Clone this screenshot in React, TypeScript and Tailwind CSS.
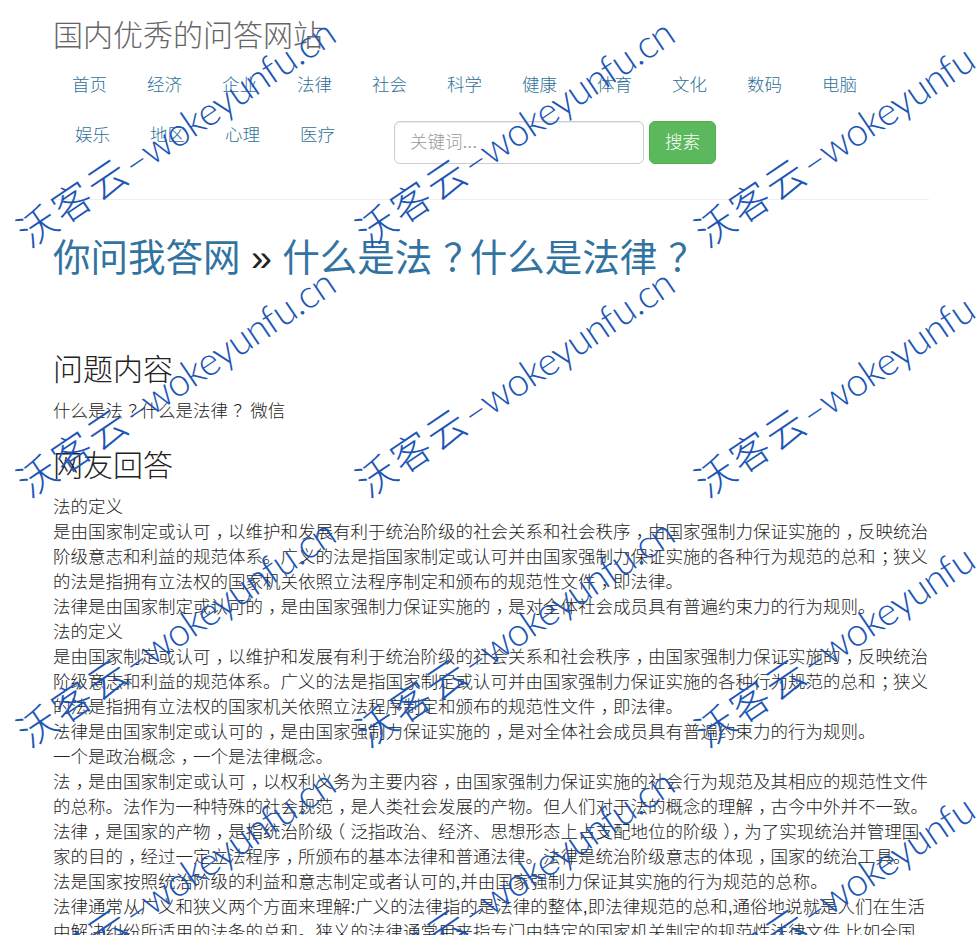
const navRowOne = ['首页', '经济', '企业', '法律', '社会', '科学', '健康', '体育', '文化', '数码', '电脑'];
const navRowTwo = ['娱乐', '地区', '心理', '医疗'];

const answerLines = [
  '法的定义',
  '是由国家制定或认可，以维护和发展有利于统治阶级的社会关系和社会秩序，由国家强制力保证实施的，反映统治阶级意志和利益的规范体系。广义的法是指国家制定或认可并由国家强制力保证实施的各种行为规范的总和；狭义的法是指拥有立法权的国家机关依照立法程序制定和颁布的规范性文件，即法律。',
  '法律是由国家制定或认可的，是由国家强制力保证实施的，是对全体社会成员具有普遍约束力的行为规则。',
  '法的定义',
  '是由国家制定或认可，以维护和发展有利于统治阶级的社会关系和社会秩序，由国家强制力保证实施的，反映统治阶级意志和利益的规范体系。广义的法是指国家制定或认可并由国家强制力保证实施的各种行为规范的总和；狭义的法是指拥有立法权的国家机关依照立法程序制定和颁布的规范性文件，即法律。',
  '法律是由国家制定或认可的，是由国家强制力保证实施的，是对全体社会成员具有普遍约束力的行为规则。',
  '一个是政治概念，一个是法律概念。',
  '法，是由国家制定或认可，以权利义务为主要内容，由国家强制力保证实施的社会行为规范及其相应的规范性文件的总称。法作为一种特殊的社会规范，是人类社会发展的产物。但人们对于法的概念的理解，古今中外并不一致。',
  '法律，是国家的产物，是指统治阶级（泛指政治、经济、思想形态上占支配地位的阶级），为了实现统治并管理国家的目的，经过一定立法程序，所颁布的基本法律和普通法律。法律是统治阶级意志的体现，国家的统治工具。',
  '法是国家按照统治阶级的利益和意志制定或者认可的,并由国家强制力保证其实施的行为规范的总称。',
  '法律通常从广义和狭义两个方面来理解:广义的法律指的是法律的整体,即法律规范的总和,通俗地说就是人们在生活中解决纠纷所适用的法条的总和。狭义的法律通常用来指专门由特定的国家机关制定的规范性法律文件,比如全国人大及其常委会制定的法律。',
];

// full-width punctuation sits in the middle of its cell in the reference font
function Cjk({ text }: { text: string }) {
  return (
    <>
      {text.split(/([，；？（）])/).map((part, i) => {
        if (part === '（') return <span key={i} className="relative -left-[0.3em]">{part}</span>;
        if (part === '，' || part === '；' || part === '？' || part === '）') {
          return <span key={i} className="relative left-[0.3em]">{part}</span>;
        }
        return part;
      })}
    </>
  );
}

function NavLink({ label }: { label: string }) {
  return (
    <li>
      <a href="#" className="block px-5 py-[12.5px] text-[#2e7098]">
        {label}
      </a>
    </li>
  );
}

// repeated site watermark, sits over the page
function Watermark() {
  const cells = Array.from({ length: 12 }, (_, i) => i);
  return (
    <div className="absolute left-[32px] top-[214px] grid grid-cols-[repeat(3,339px)] auto-rows-[250px] pointer-events-none">
      {cells.map((i) => (
        <div key={i} className="h-0 w-0">
          <span className="block origin-bottom-left -rotate-[34deg] whitespace-nowrap text-[39px] leading-none text-[#1c56b5] [font-family:Lato,'Noto_Sans_CJK_SC',sans-serif]">
            <span className="tracking-[3px]">沃客云</span><span className="tracking-[-0.8px]">–wokeyunfu.cn</span>
          </span>
        </div>
      ))}
    </div>
  );
}

export default function App() {
  return (
    <div className="relative h-[935px] w-[976px] overflow-hidden bg-white text-[17.5px] leading-[25px] font-light text-[#222] [font-family:'Liberation_Sans','Noto_Sans_CJK_SC',sans-serif]">
      <div className="ml-[53px] w-[876px]">
        <header>
          <div className="h-[60px] pt-[15px] text-[30px] leading-[42px] text-[#666]">国内优秀的问答网站</div>
          <ul className="-ml-px flex">
            {navRowOne.map((label) => (
              <NavLink key={label} label={label} />
            ))}
          </ul>
          <div className="flex items-start pl-[2px]">
            <ul className="flex">
              {navRowTwo.map((label) => (
                <NavLink key={label} label={label} />
              ))}
            </ul>
            <form className="ml-[39px] mt-[11px] flex gap-[5px]">
              <input
                placeholder="关键词..."
                className="h-[43px] w-[250px] rounded-md border border-[#ccc] px-[15px] shadow-[inset_0_1px_1px_rgba(0,0,0,0.075)] placeholder:text-[#999]"
              />
              <button type="button" className="h-[43px] w-[67px] rounded-md border border-[#4cae4c] bg-[#5cb85c] text-white">
                搜索
              </button>
            </form>
          </div>
        </header>
        <hr className="mt-[35px] border-t border-[#eee]" />
        <h1 className="mt-[31px] text-[37.5px] leading-[54px] font-normal">
          <a href="#" className="text-[#32739f]">你问我答网</a> » <a href="#" className="text-[#32739f]"><Cjk text="什么是法？什么是法律？" /></a>
        </h1>
        <h3 className="mt-[64px] text-[30px] leading-[42px]">问题内容</h3>
        <p className="mt-[8px]"><Cjk text="什么是法？什么是法律？ 微信" /></p>
        <h3 className="mt-[21px] text-[30px] leading-[42px]">网友回答</h3>
        <div className="mt-[8px]">
          {answerLines.map((line, i) => (
            <div key={i}><Cjk text={line} /></div>
          ))}
        </div>
      </div>
      <Watermark />
    </div>
  );
}
